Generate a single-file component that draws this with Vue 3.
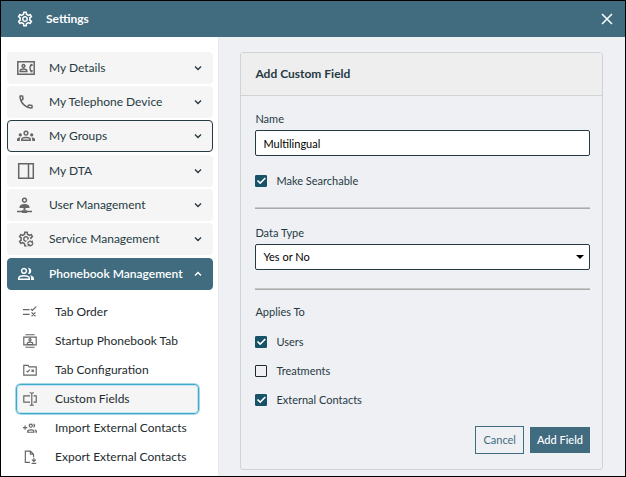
<script setup>
import { ref } from 'vue'

const gear =
  'M19.43 12.98c.04-.32.07-.64.07-.98 0-.34-.03-.66-.07-.98l2.11-1.65c.19-.15.24-.42.12-.64l-2-3.46a.5.5 0 0 0-.61-.22l-2.49 1c-.52-.4-1.08-.73-1.69-.98l-.38-2.65A.488.488 0 0 0 14 2h-4c-.25 0-.46.18-.49.42l-.38 2.65c-.61.25-1.17.59-1.69.98l-2.49-1a.5.5 0 0 0-.61.22l-2 3.46c-.13.22-.07.49.12.64l2.11 1.65c-.04.32-.07.65-.07.98 0 .33.03.66.07.98l-2.11 1.65c-.19.15-.24.42-.12.64l2 3.46c.12.22.39.3.61.22l2.49-1c.52.4 1.08.73 1.69.98l.38 2.65c.03.24.24.42.49.42h4c.25 0 .46-.18.49-.42l.38-2.65c.61-.25 1.17-.59 1.69-.98l2.49 1c.23.09.49 0 .61-.22l2-3.46c.12-.22.07-.49-.12-.64zm-1.98-1.71c.04.31.05.52.05.73s-.02.43-.05.73l-.14 1.13.89.7 1.08.84-.7 1.21-1.27-.51-1.04-.42-.9.68c-.43.32-.84.56-1.25.73l-1.06.43-.16 1.13-.2 1.35h-1.4l-.19-1.35-.16-1.13-1.06-.43c-.43-.18-.83-.41-1.23-.71l-.91-.7-1.06.43-1.27.51-.7-1.21 1.08-.84.89-.7-.14-1.13c-.03-.31-.05-.54-.05-.74s.02-.43.05-.73l.14-1.13-.89-.7-1.08-.84.7-1.21 1.27.51 1.04.42.9-.68c.43-.32.84-.56 1.25-.73l1.06-.43.16-1.13.2-1.35h1.39l.19 1.35.16 1.13 1.06.43c.43.18.83.41 1.23.71l.91.7 1.06-.43 1.27-.51.7 1.21-1.07.85-.89.7zM12 8c-2.21 0-4 1.79-4 4s1.79 4 4 4 4-1.79 4-4-1.79-4-4-4zm0 6c-1.1 0-2-.9-2-2s.9-2 2-2 2 .9 2 2-.9 2-2 2z'
const handset =
  'M6.54 5c.06.89.21 1.76.45 2.59l-1.2 1.2c-.41-1.2-.67-2.47-.76-3.79h1.51m9.86 12.02c.85.24 1.72.39 2.6.45v1.49c-1.32-.09-2.59-.35-3.8-.75l1.2-1.19M7.5 3H4c-.55 0-1 .45-1 1 0 9.39 7.61 17 17 17 .55 0 1-.45 1-1v-3.49c0-.55-.45-1-1-1-1.24 0-2.45-.2-3.57-.57-.1-.04-.21-.05-.31-.05-.26 0-.51.1-.71.29l-2.2 2.2c-2.83-1.45-5.15-3.76-6.59-6.59l2.2-2.2c.28-.28.36-.67.25-1.02C8.7 6.45 8.5 5.25 8.5 4c0-.55-.45-1-1-1z'

// Icons live on an 18x18 grid: "line" is stroked, "fill" is filled.
// "glyph" is a filled outline on a 24x24 grid, drawn below the other two.
const icons = {
  details: {
    line: 'M.8 2.8h16.4v12.4H.8zM6.5 5.6a1.4 1.4 0 1 1-.01 0zM3.2 12.5v-.6c0-1.3 1.6-2 3.3-2s3.3.7 3.3 2v.6zM14.8 5.5c-2.4 1-2.4 6 0 7',
    fill: 'M13.5 5l1.9-.3.4 2.2-1.6.4zM14.2 10.9l1.6.4-.4 2.2-1.9-.3z',
  },
  phone: { glyph: handset },
  groups: {
    line: 'M9 4.2a1.9 1.9 0 1 1-.01 0zM4.8 13.3v-.6c0-1.3 2-2.1 4.2-2.1s4.2.8 4.2 2.1v.6z',
    fill: 'M3.3 6.3a1.6 1.6 0 1 1-.01 0zM14.7 6.3a1.6 1.6 0 1 1-.01 0zM0 14v-1.5c0-1.2 1.4-2.2 3.5-2.2-.5.7-.7 1.4-.7 2.2V14zM18 14v-1.5c0-1.2-1.4-2.2-3.5-2.2.5.7.7 1.4.7 2.2V14z',
  },
  panes: { line: 'M1.7 1.7h14.6v14.6H1.7zM11.5 1.7v14.6' },
  user: {
    line: 'M7.5 2.2a2 2 0 1 1-.01 0zM0 15.5h15',
    fill: 'M2.5 12V11c0-2 2.4-3 5-3s5 1 5 3v1zM6.5 12h2v2h-2zM5 14.3h5V17H5z',
  },
  service: {
    glyph: gear,
    badge: true,
    fill: 'M10.3 14.2c-.4-2 1-3.8 3-3.8.7 0 1.300.2 1.800.5l.8-.8v2.700h-2.700l.9-.9c-1.500-.6-2.900.6-2.700 2.300zM16.300 12.600c.4 2-1 3.800-3 3.800-.7 0-1.300-.2-1.800-.5l-.8.8V14h2.700l-.9.9c1.500.6 2.900-.6 2.700-2.300z',
  },
  people: {
    line: 'M7 3.5a2.4 2.4 0 1 1-.01 0zM1.7 14.2v-.9c0-1.7 2.6-2.6 5.3-2.6s5.3.9 5.3 2.6v.9z',
    fill: 'M11 2.7c2 0 3.3 1.5 3.3 3.2S13 9.1 11 9.1c1.3-2 1.3-4.4 0-6.4zM13.3 10.2c2.1.5 3.7 1.5 3.7 3.2V15h-3v-1.7c0-1.2-.3-2.3-.7-3.1z',
  },
  rule: { line: 'M0 6h8.5M0 12h8.5M10 5l2 2L17 2M11 9.5l5 5M16 9.5l-5 5' },
  contacts: {
    line: 'M3 1h12M3 17h12M1 4h16v10H1zM9 6a1.4 1.4 0 1 1-.01 0zM5.5 13.5v-1c0-1.3 1.8-2 3.5-2s3.5.7 3.5 2v1z',
  },
  folder: { line: 'M1 3h5.5L8 5h9v10.5H1zM4.5 10L6 11.6 9 8.5M11 8.5l3 3M14 8.5l-3 3' },
  field: {
    line: 'M9 5H1v8h8M13.5 5H17v8h-3.5M8.5 1h1.2c1 0 1.6.6 1.6 1.6v12.8c0 1-.6 1.6-1.6 1.6H8.5M14 1h-1.1c-1 0-1.6.6-1.6 1.6M14 17h-1.1c-1 0-1.6-.6-1.6-1.6',
  },
  importing: {
    line: 'M0 8.5h5.5M2.7 5.8v5.5M10 4a2 2 0 1 1-.01 0zM6 14.5v-.8c0-1.4 2-2.2 4-2.2s4 .8 4 2.2v.8z',
    fill: 'M13 3.3c3.6 0 3.6 5.4 0 5.4 1-1.8 1-3.6 0-5.4zM14.5 10.5c2.2.5 3.5 1.4 3.5 3v1.7h-2v-1.7c0-1.2-.7-2.3-1.5-3z',
  },
  exporting: { line: 'M9 16H3V1.5h6.5l4 4V9M9.5 1.5v4h4M14 10v4.5M11.5 12.3l2.5 2.5 2.5-2.5M11 17.200h6' },
}

const groups = [
  [
    { label: 'My Details', icon: 'details' },
    { label: 'My Telephone Device', icon: 'phone' },
    { label: 'My Groups', icon: 'groups', outlined: true },
  ],
  [
    { label: 'My DTA', icon: 'panes' },
    { label: 'User Management', icon: 'user' },
    { label: 'Service Management', icon: 'service' },
  ],
  [{ label: 'Phonebook Management', icon: 'people', open: true }],
]

const pages = [
  { label: 'Tab Order', icon: 'rule' },
  { label: 'Startup Phonebook Tab', icon: 'contacts' },
  { label: 'Tab Configuration', icon: 'folder' },
  { label: 'Custom Fields', icon: 'field' },
  { label: 'Import External Contacts', icon: 'importing' },
  { label: 'Export External Contacts', icon: 'exporting' },
]

const current = ref('Custom Fields')
const name = ref('Multilingual')
const searchable = ref(true)
const dataType = ref('Yes or No')
const targets = ref([
  { id: 'users', label: 'Users', on: true },
  { id: 'treatments', label: 'Treatments', on: false },
  { id: 'external', label: 'External Contacts', on: true },
])
</script>

<template>
  <div class="window">
    <header class="titlebar">
      <svg class="title-icon" viewBox="0 0 24 24" aria-hidden="true"><path :d="gear" /></svg>
      <h1>Settings</h1>
      <button class="close" type="button" aria-label="Close">
        <svg viewBox="0 0 12 12" aria-hidden="true"><path d="M1 1l10 10M11 1L1 11" /></svg>
      </button>
    </header>

    <div class="content">
      <nav class="sidebar">
        <div v-for="(group, i) in groups" :key="i" class="group">
          <button
            v-for="item in group"
            :key="item.label"
            type="button"
            class="section"
            :class="{ open: item.open, outlined: item.outlined }"
            :aria-expanded="!!item.open"
          >
            <svg class="icon" viewBox="0 0 18 18" aria-hidden="true">
              <svg v-if="icons[item.icon].glyph" width="18" height="18" viewBox="0 0 24 24">
                <path class="fill" :d="icons[item.icon].glyph" />
              </svg>
              <circle v-if="icons[item.icon].badge" class="knockout" cx="13.3" cy="13.4" r="4.5" />
              <path v-if="icons[item.icon].line" class="line" :d="icons[item.icon].line" />
              <path v-if="icons[item.icon].fill" class="fill" :d="icons[item.icon].fill" />
            </svg>
            <span class="text">{{ item.label }}</span>
            <svg class="chevron" viewBox="0 0 8 8" aria-hidden="true">
              <path :d="item.open ? 'M1 5.5l3-3 3 3' : 'M1 2.5l3 3 3-3'" />
            </svg>
          </button>
        </div>
        <ul class="pages">
          <li v-for="page in pages" :key="page.label">
            <button
              type="button"
              class="page"
              :class="{ current: page.label === current }"
              @click="current = page.label"
            >
              <svg class="icon" viewBox="0 0 18 18" aria-hidden="true">
                <path class="line" :d="icons[page.icon].line" />
                <path v-if="icons[page.icon].fill" class="fill" :d="icons[page.icon].fill" />
              </svg>
              <span>{{ page.label }}</span>
            </button>
          </li>
        </ul>
      </nav>

      <main class="main">
        <form class="panel" @submit.prevent>
          <h2>Add Custom Field</h2>
          <div class="fields">
            <div class="field">
              <label for="name">Name</label>
              <input id="name" v-model="name" class="control" type="text" />
            </div>
            <label class="check single" for="searchable">
              <input id="searchable" v-model="searchable" type="checkbox" />
              Make Searchable
            </label>
            <hr />
            <div class="field">
              <label for="type">Data Type</label>
              <div class="select">
                <select id="type" v-model="dataType" class="control">
                  <option>Yes or No</option>
                  <option>Text</option>
                </select>
                <svg viewBox="0 0 8 4" aria-hidden="true"><path d="M0 0h8L4 4z" /></svg>
              </div>
            </div>
            <hr />
            <fieldset>
              <legend>Applies To</legend>
              <label v-for="t in targets" :key="t.id" class="check" :for="t.id">
                <input :id="t.id" v-model="t.on" type="checkbox" />
                {{ t.label }}
              </label>
            </fieldset>
            <div class="actions">
              <button class="cancel" type="button">Cancel</button>
              <button class="add" type="submit">Add Field</button>
            </div>
          </div>
        </form>
      </main>
    </div>
  </div>
</template>

<style>
body {
  margin: 0;
  background: #eff0f4;
}
</style>

<style scoped>
* {
  box-sizing: border-box;
}

.window {
  display: flex;
  flex-direction: column;
  min-height: 100vh;
  border: 1px solid #000;
  background: #eff0f4;
  color: #263a43;
  font-family: Lato, 'Liberation Sans', sans-serif;
  font-size: 12px;
  line-height: 16px;
}

button,
input,
select {
  font: inherit;
  color: inherit;
}

button {
  cursor: pointer;
}

.titlebar {
  display: flex;
  align-items: center;
  height: 36px;
  padding: 0 12px 0 15px;
  background: #416c7f;
  color: #fff;
}

.title-icon {
  width: 18px;
  height: 18px;
  fill: #fff;
}

h1 {
  flex: 1;
  margin: 0 0 0 12px;
  font-size: 12px;
  font-weight: 700;
}

.close {
  display: grid;
  padding: 0;
  border: 0;
  background: none;
}

.close svg {
  width: 12px;
  height: 12px;
  fill: none;
  stroke: #fff;
  stroke-width: 1.5;
}

.content {
  display: flex;
  flex: 1;
}

.sidebar {
  display: flex;
  flex-direction: column;
  flex: 0 0 35%;
  min-width: 0;
  padding: 15px 5px 0 6px;
  border-right: 1px solid #e8e9ec;
  background: #fff;
}

.group {
  display: flex;
  flex-direction: column;
  gap: 2px;
}

.group + .group {
  margin-top: 3px;
}

.section {
  display: flex;
  align-items: center;
  height: 32px;
  padding: 0 10px 0 9px;
  border: 1px solid #f5f5f5;
  border-radius: 4px;
  background: #f5f5f5;
  text-align: left;
}

.section.outlined {
  border-color: #263a43;
}

.section.open {
  border-color: #416c7f;
  background: #416c7f;
  color: #fff;
  font-weight: 600;
}

.text {
  flex: 1;
  margin-left: 14px;
  white-space: nowrap;
}

.icon {
  flex: none;
  width: 18px;
  height: 18px;
  color: #666;
}

.open .icon {
  color: #fff;
}

.line {
  fill: none;
  stroke: currentColor;
  stroke-width: 1.5;
}

.fill {
  fill: currentColor;
}

.knockout {
  fill: #f5f5f5;
}

.chevron {
  width: 8px;
  height: 8px;
  fill: none;
  stroke: currentColor;
  stroke-width: 1.4;
}

.pages {
  display: flex;
  flex-direction: column;
  gap: 1px;
  margin: 0;
  padding: 8px 15px 4px 10px;
  list-style: none;
}

.page {
  display: flex;
  align-items: center;
  gap: 18px;
  width: 100%;
  height: 28px;
  padding: 0 6px;
  border: 0;
  border-radius: 4px;
  background: none;
  color: #1d2b30;
  text-align: left;
  white-space: nowrap;
}

.page .icon {
  width: 14px;
  height: 14px;
}

.page.current {
  background: #f5f5f5;
  box-shadow: inset 0 0 0 1px #c3e4ee, 0 0 0 1px #3fa9cb, 0 0 0 2px #a5d8e7;
}

.main {
  flex: 1;
  min-width: 0;
  padding: 15px 22px 5px 21px;
}

.panel {
  border: 1px solid #d0d3d6;
  border-radius: 3px;
  font-size: 11px;
}

h2 {
  margin: 0;
  padding: 13px 14px;
  border-bottom: 1px solid #d0d3d6;
  background: #eee;
  font-size: 12px;
  font-weight: 700;
}

.fields {
  padding: 15px 12px 15px 14px;
}

.field {
  display: flex;
  flex-direction: column;
  gap: 3px;
}

hr + .field {
  padding-top: 2px;
}

.control {
  width: 100%;
  height: 26px;
  padding: 0 7px;
  border: 1px solid #263a43;
  border-radius: 2px;
  background: #fff;
  color: #000;
  appearance: none;
}

.select {
  display: grid;
  align-items: center;
}

.select select,
.select svg {
  grid-area: 1 / 1;
}

.select svg {
  justify-self: end;
  width: 8px;
  height: 4px;
  margin-right: 6px;
  pointer-events: none;
}

hr {
  height: 2px;
  margin: 18px 0 14px;
  border: 0;
  border-top: 1px solid #c8c8c8;
  border-bottom: 1px solid #aaa;
}

.check {
  display: flex;
  align-items: center;
  gap: 9px;
}

.check.single {
  margin-top: 17px;
}

.check input {
  display: grid;
  place-items: center;
  flex: none;
  width: 12px;
  height: 12px;
  margin: 0;
  border: 1px solid #1d2b30;
  border-radius: 1px;
  appearance: none;
}

.check input:checked {
  border-color: #185268;
  background: #185268;
}

.check input:checked::after {
  content: '';
  width: 10px;
  height: 8px;
  background: #fff;
  clip-path: polygon(5% 50%, 17% 36%, 38% 62%, 83% 6%, 95% 20%, 38% 92%);
}

fieldset {
  display: flex;
  flex-direction: column;
  gap: 13px;
  margin: 0;
  padding: 0;
  border: 0;
}

legend {
  margin-bottom: 14px;
  padding: 0;
}

.actions {
  display: flex;
  align-items: center;
  justify-content: flex-end;
  gap: 6px;
  margin-top: 18px;
}

.cancel,
.add {
  padding: 5px 7px;
  border: 0;
  background: #416c7f;
  color: #fff;
}

.add {
  font-weight: 500;
}

.cancel {
  border: 1px solid #416c7f;
  background: none;
  color: #416c7f;
}
</style>
